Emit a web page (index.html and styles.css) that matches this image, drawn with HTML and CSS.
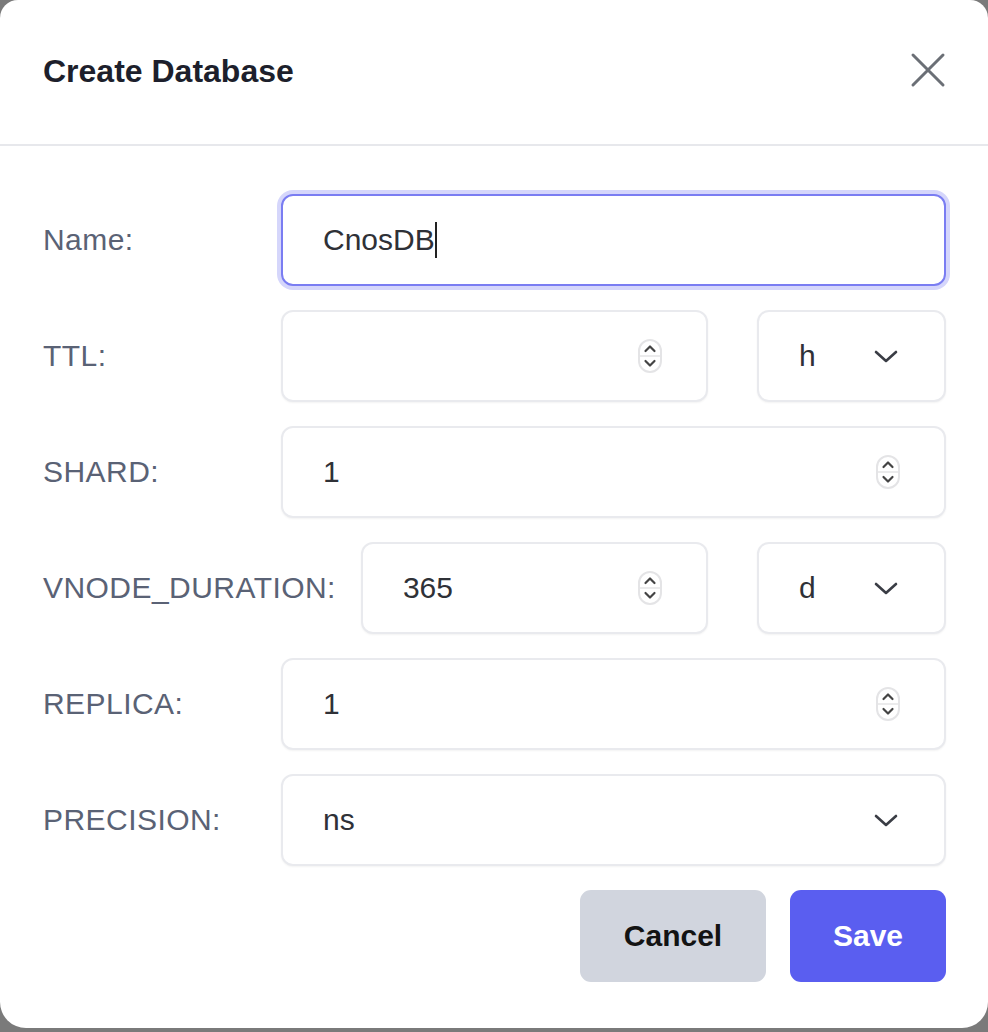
FILE: index.html
```html
<!DOCTYPE html>
<html>
<head>
<meta charset="utf-8">
<link rel="stylesheet" href="styles.css">
</head>
<body>
<div class="modal">
  <div class="header">
    <div class="title">Create Database</div>
    <svg class="close" width="36" height="36" viewBox="0 0 36 36"><path d="M3 3 L33 33 M33 3 L3 33" stroke="#6b6f76" stroke-width="3" stroke-linecap="round" fill="none"/></svg>
  </div>
  <div class="form">
    <div class="row">
      <div class="label">Name:</div>
      <div class="field focus"><span class="val">CnosDB</span><span class="caret"></span></div>
    </div>
    <div class="row">
      <div class="label">TTL:</div>
      <div class="field num"><span class="val"></span>
        <svg class="spin" width="26" height="36" viewBox="0 0 26 36"><rect x="2" y="2" width="22" height="32" rx="11" fill="none" stroke="#e4e4e6" stroke-width="2"/><line x1="2" y1="18" x2="24" y2="18" stroke="#e4e4e6" stroke-width="1.5"/><path d="M8.5 13 L13 8.5 L17.5 13 M8.5 23 L13 27.5 L17.5 23" stroke="#444" stroke-width="2.2" fill="none" stroke-linecap="round" stroke-linejoin="round"/></svg>
      </div>
      <div class="field select"><span class="val">h</span>
        <svg class="chev" width="24" height="14" viewBox="0 0 24 14"><path d="M2 2 L12 11 L22 2" stroke="#3a3d45" stroke-width="2.6" fill="none" stroke-linecap="round" stroke-linejoin="round"/></svg>
      </div>
    </div>
    <div class="row">
      <div class="label">SHARD:</div>
      <div class="field num"><span class="val">1</span>
        <svg class="spin" width="26" height="36" viewBox="0 0 26 36"><rect x="2" y="2" width="22" height="32" rx="11" fill="none" stroke="#e4e4e6" stroke-width="2"/><line x1="2" y1="18" x2="24" y2="18" stroke="#e4e4e6" stroke-width="1.5"/><path d="M8.5 13 L13 8.5 L17.5 13 M8.5 23 L13 27.5 L17.5 23" stroke="#444" stroke-width="2.2" fill="none" stroke-linecap="round" stroke-linejoin="round"/></svg>
      </div>
    </div>
    <div class="row">
      <div class="label">VNODE_DURATION:</div>
      <div class="field num"><span class="val">365</span>
        <svg class="spin" width="26" height="36" viewBox="0 0 26 36"><rect x="2" y="2" width="22" height="32" rx="11" fill="none" stroke="#e4e4e6" stroke-width="2"/><line x1="2" y1="18" x2="24" y2="18" stroke="#e4e4e6" stroke-width="1.5"/><path d="M8.5 13 L13 8.5 L17.5 13 M8.5 23 L13 27.5 L17.5 23" stroke="#444" stroke-width="2.2" fill="none" stroke-linecap="round" stroke-linejoin="round"/></svg>
      </div>
      <div class="field select"><span class="val">d</span>
        <svg class="chev" width="24" height="14" viewBox="0 0 24 14"><path d="M2 2 L12 11 L22 2" stroke="#3a3d45" stroke-width="2.6" fill="none" stroke-linecap="round" stroke-linejoin="round"/></svg>
      </div>
    </div>
    <div class="row">
      <div class="label">REPLICA:</div>
      <div class="field num"><span class="val">1</span>
        <svg class="spin" width="26" height="36" viewBox="0 0 26 36"><rect x="2" y="2" width="22" height="32" rx="11" fill="none" stroke="#e4e4e6" stroke-width="2"/><line x1="2" y1="18" x2="24" y2="18" stroke="#e4e4e6" stroke-width="1.5"/><path d="M8.5 13 L13 8.5 L17.5 13 M8.5 23 L13 27.5 L17.5 23" stroke="#444" stroke-width="2.2" fill="none" stroke-linecap="round" stroke-linejoin="round"/></svg>
      </div>
    </div>
    <div class="row">
      <div class="label">PRECISION:</div>
      <div class="field selectwide"><span class="val">ns</span>
        <svg class="chev" width="24" height="14" viewBox="0 0 24 14"><path d="M2 2 L12 11 L22 2" stroke="#3a3d45" stroke-width="2.6" fill="none" stroke-linecap="round" stroke-linejoin="round"/></svg>
      </div>
    </div>
  </div>
  <div class="actions">
    <div class="btn cancel">Cancel</div>
    <div class="btn save">Save</div>
  </div>
</div>
</body>
</html>
```
FILE: styles.css
```css
html, body {
  margin: 0;
  padding: 0;
  background: #7a7a7a;
  height: 1032px;
  overflow: hidden;
}
body {
  font-family: "Liberation Sans", Arial, sans-serif;
}
.modal {
  width: 988px;
  height: 1028px;
  background: #ffffff;
  border-radius: 18px 18px 26px 26px;
  box-sizing: border-box;
}
.header {
  height: 144px;
  border-bottom: 2px solid #e7e8ec;
  display: flex;
  align-items: center;
  justify-content: space-between;
  padding: 0 42px 0 43px;
}
.title {
  font-size: 32px;
  font-weight: bold;
  color: #1d1f2c;
  margin-top: -2px;
}
.close {
  margin-top: -4px;
  margin-right: 0;
}
.form {
  padding: 48px 42px 0 43px;
  display: flex;
  flex-direction: column;
  gap: 24px;
}
.row {
  display: flex;
  align-items: center;
  height: 92px;
}
.label {
  min-width: 213px;
  margin-right: 25px;
  font-size: 30px;
  letter-spacing: 0.45px;
  color: #5a6275;
  flex: none;
}
.field {
  height: 92px;
  box-sizing: border-box;
  border: 2px solid #e9eaee;
  border-radius: 12px;
  box-shadow: 0 1px 2px rgba(0,0,0,0.05);
  display: flex;
  align-items: center;
  padding: 0 44px 0 40px;
  font-size: 30px;
  color: #2f3137;
  background: #fff;
}
.field.num, .field.selectwide, .field.focus {
  flex: 1;
}
.field.num {
  justify-content: space-between;
}
.field.focus {
  border: 2px solid #7a7df2;
  box-shadow: 0 0 0 4px #d5d6fb;
  padding-left: 40px;
}
.caret {
  display: inline-block;
  width: 2px;
  height: 36px;
  background: #222;
  margin-left: 0;
}
.spin {
  margin-right: -1px;
}
.field.select {
  width: 189px;
  flex: none;
  margin-left: 49px;
  justify-content: space-between;
  padding-right: 46px;
}
.field.selectwide {
  justify-content: space-between;
  padding-right: 46px;
}
.chev {
  margin-top: 2px;
}
.actions {
  display: flex;
  justify-content: flex-end;
  gap: 24px;
  padding: 24px 42px 0 43px;
}
.btn {
  height: 92px;
  border-radius: 11px;
  display: flex;
  align-items: center;
  justify-content: center;
  font-size: 30px;
  font-weight: bold;
}
.cancel {
  width: 186px;
  background: #d1d5de;
  color: #131313;
}
.save {
  width: 156px;
  background: #5a5ef0;
  color: #ffffff;
}
```
